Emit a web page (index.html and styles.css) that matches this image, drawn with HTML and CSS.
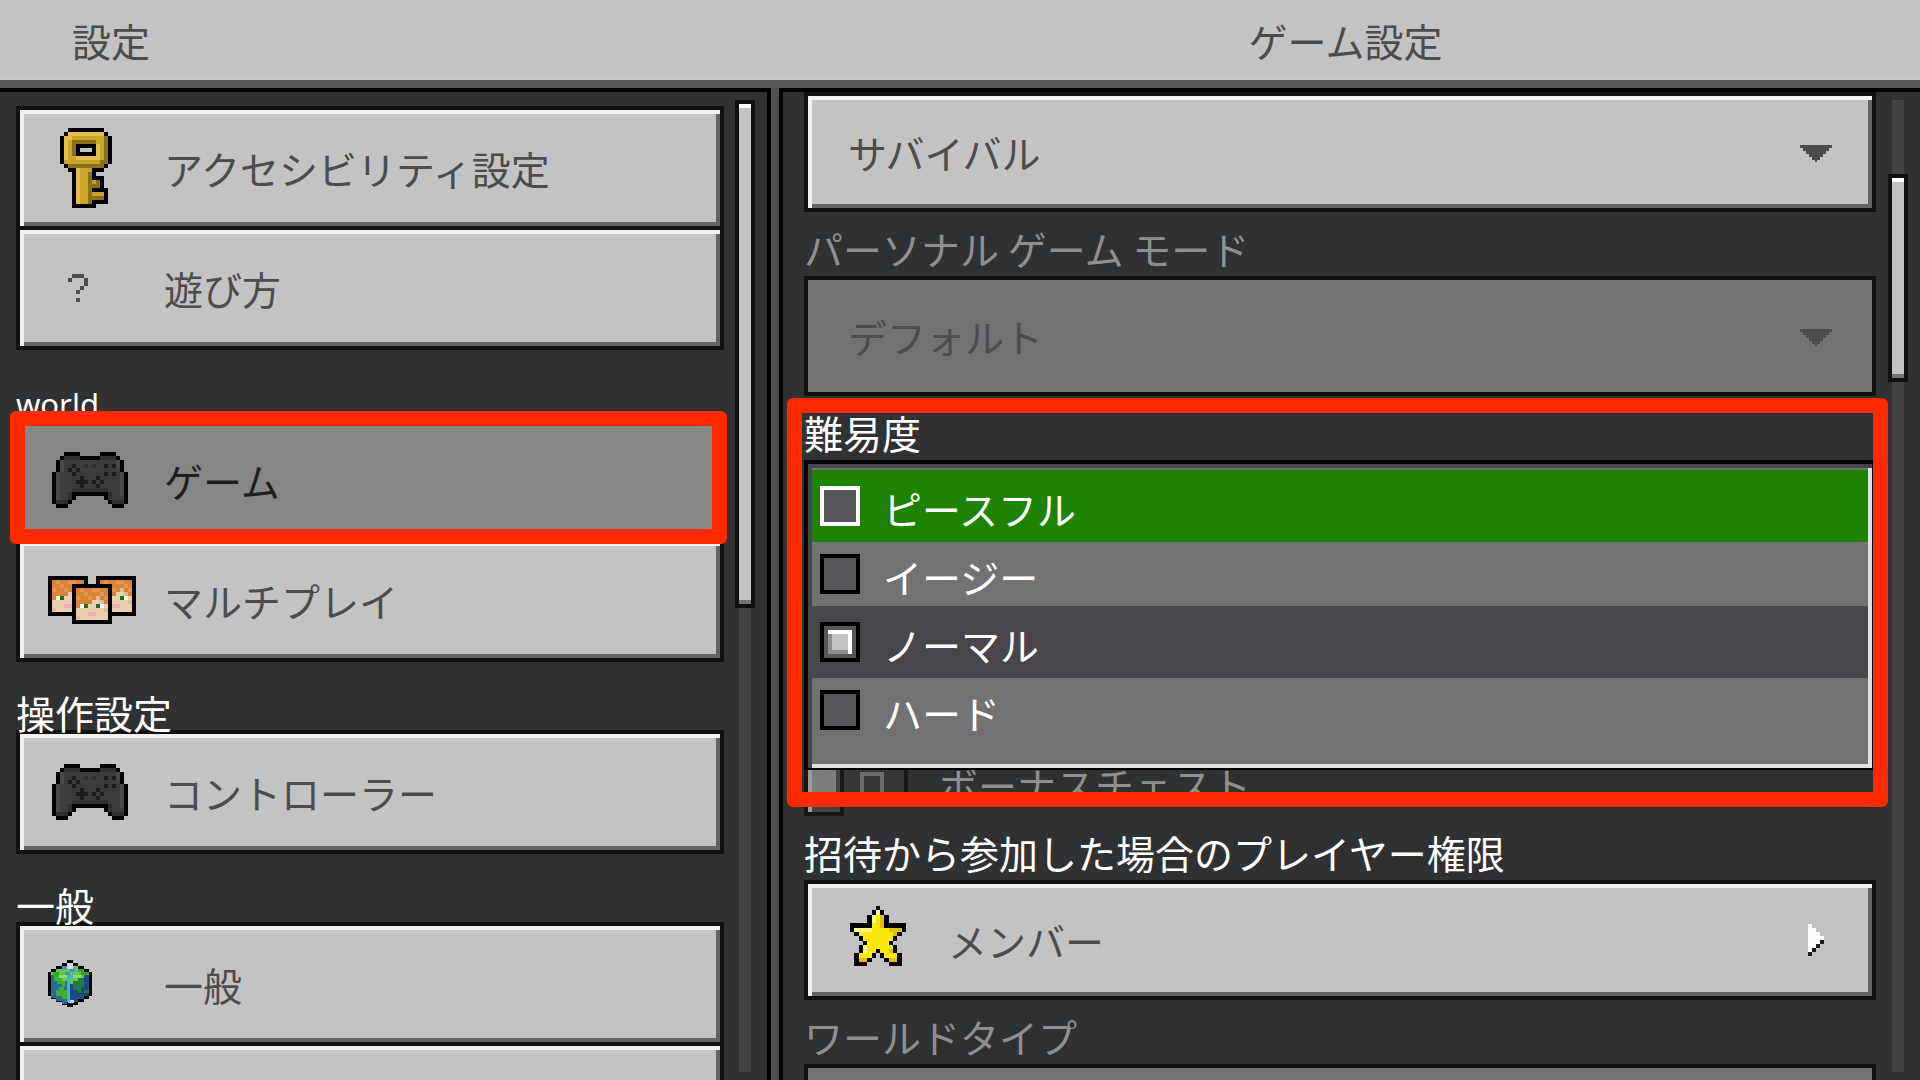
FILE: index.html
```html
<!DOCTYPE html>
<html lang="ja">

<head>
  <meta charset="UTF-8">
  <meta name="viewport" content="width=device-width, initial-scale=1">
  <title>ゲーム設定</title>
  <link rel="stylesheet" href="styles.css">
</head>

<body>

  <!-- icons, one unit = one game pixel -->
  <svg class="sprites" aria-hidden="true">
    <symbol id="pad" viewBox="0 0 31 20">
      <g transform="translate(3 3)" fill="none">
        <path fill="#3d3d3d" d="M3 1h4v1h5v-1h4v1h1v3h1v8h-3v-1h-1v-1h-1v-1h-7v1h-1v1h-1v1h-3v-8h1v-3h1z" />
        <path stroke="#4b4b4b" d="M1 5.5h1M1 6.5h1M1 7.5h1M1 8.5h1M1 9.5h1M1 10.5h1M1 11.5h1M17 5.5h1M17 6.5h1M17 7.5h1M17 8.5h1M17 9.5h1M17 10.5h1M2 2.5h1M2 3.5h1M2 4.5h1M16 2.5h1M16 3.5h1" />
        <path stroke="#303030" d="M3 1.5h4M12 1.5h4M5 9.5h9M4 10.5h1M14 10.5h1M4 11.5h1M14 11.5h1M1 12.5h3M15 12.5h3M8 3.5h1M10 3.5h1" />
        <path stroke="#1c1c1c" d="M5 3.5h1M4 4.5h1M6 4.5h1M5 5.5h1M13 3.5h1M15 3.5h1M13 5.5h1M15 5.5h1M7 6.5h1M6 7.5h3M7 8.5h1M11 6.5h1M10 7.5h1M12 7.5h1M11 8.5h1" />
        <path stroke="#000" d="M3 .5h4M12 .5h4M2 1.5h1M7 1.5h5M16 1.5h1M1 2.5h1M1 3.5h1M1 4.5h1M17 2.5h1M17 3.5h1M17 4.5h1M5 10.5h9M5 11.5h1M13 11.5h1M4 12.5h1M14 12.5h1M1 13.5h3M15 13.5h3" />
        <path fill="#000" d="M0 5h1v8h-1zM18 5h1v8h-1z" />
      </g>
    </symbol>
    <symbol id="key" viewBox="0 0 31 20">
      <g transform="translate(5 0)">
        <path fill="#000" fill-rule="evenodd" d="M2 0h9v1h1v1h1v7h-1v1h-1v1h-2v1h2v3h1v4h-3v1h-6v-9h-1v-1h-1v-1h-1v-7h1v-1h1zM5 5h3v1h-3z" />
        <path fill="#c9a42b" fill-rule="evenodd" d="M2 1h9v1h1v7h-1v1h-3v3h2v2h-2v1h3v2h-3v1h-4v-9h-2v-1h-1v-7h1zM4 4v3h5v-3z" />
        <path fill="#e4bd4c" d="M2 1h9v1h-8v1h-1v5h-1v-6h1zM4 10h1v9h-1zM4 7h5v-3h1v4h-6z" />
        <path fill="#8c6f1b" d="M11 2h1v7h-1v1h-9v-1h8v-1h1zM3 3h6v1h-5v3h-1zM7 11h1v8h-1zM8 14h1v1h-1zM8 17h3v1h-3zM9 13h1v2h-1z" />
      </g>
    </symbol>
    <symbol id="help" viewBox="0 0 124 80">
      <path fill="#4c4c4c" d="M32 26h12v4h-12zM28 30h4v4h-4zM44 30h4v8h-4zM40 38h4v4h-4zM36 42h4v4h-4zM36 50h4v4h-4z" />
    </symbol>
    <symbol id="face" viewBox="0 0 10 10">
      <path fill="#000" d="M0 0h10v10h-10z" />
      <path fill="#eacfae" d="M1 1h8v8h-8z" />
      <path fill="#d88338" d="M1 1h8v4h-1v-1h-1v-1h-1v1h-1v1h-3v1h-1z" />
      <path fill="#e39549" d="M2 1h1v1h-1zM5 1h2v1h-2zM3 2h1v1h-1zM7 2h1v1h-1zM1 3h1v1h-1zM4 3h1v1h-1zM8 3h1v1h-1z" />
      <path fill="#dcbd98" d="M6 3h1v1h-1zM7 4h1v1h-1zM1 8h1v1h-1zM8 6h1v1h-1z" />
      <path fill="#fff" d="M2 5h1v1h-1zM7 5h1v1h-1z" />
      <path fill="#236b26" d="M3 5h1v1h-1zM6 5h1v1h-1z" />
      <path fill="#e8b5ae" d="M4 7h2v1h-2z" />
    </symbol>
    <symbol id="players" viewBox="0 0 31 20">
      <use href="#face" x="2" y="4" width="10" height="10" />
      <use href="#face" x="14" y="4" width="10" height="10" />
      <use href="#face" x="8" y="6" width="10" height="10" />
    </symbol>
    <symbol id="globe" viewBox="0 0 124 80">
      <g transform="translate(8 16)">
        <path fill="#000" d="M19 0h6v3h5v3h6v3h5v3h3v24h-3v3h-5v3h-6v3h-5v2h-6v-2h-5v-3h-6v-3h-5v-3h-3v-24h3v-3h5v-3h6v-3h5z" />
        <path fill="#62c94b" d="M19 3h6v3h5v3h6v3h5v3h-5v3h-6v3h-5v3h-6v-3h-5v-3h-6v-3h-5v-3h5v-3h6v-3h5z" />
        <path fill="#2b6a93" d="M3 15h5v3h6v3h5v23h-5v-3h-6v-3h-5z" />
        <path fill="#174b87" d="M41 15v21h-5v3h-6v3h-5v2h-3v-20h3v-3h5v-3h6v-3z" />
        <path fill="#3fae32" d="M6 15h8v6h3v6h-3v-3h-5v-3h-3zM11 27h5v3h3v9h-5v-3h-6v-6h3z" />
        <path fill="#247a3b" d="M25 21h5v-3h6v9h-3v6h-3v-3h-5zM36 30h5v3h-5z" />
        <path fill="#35a52a" d="M30 9h6v3h5v3h-8v-3h-3zM5 12h6v3h-6z" />
        <path fill="#8bdc74" d="M11 15h8v3h-8zM25 15h8v3h-8z" />
        <path fill="#c6dce3" d="M19 3h6v6h-6zM20 40h6v3h-6z" />
        <path fill="#4f8bc6" d="M22 9h5v3h-5v3h-5v-3h5zM14 6h5v3h-5z" />
        <path fill="#3fb2dc" d="M19 15h6v3h-3v24h-3z" />
      </g>
    </symbol>
    <symbol id="star" viewBox="0 0 13 16">
      <path fill="#000" d="M6 0h1v1h1v1h1v2h4v2h-1v1h-1v1h-1v1h1v2h1v3h-3v-1h-1v-1h-1v-1h-1v1h-1v1h-1v1h-3v-3h1v-2h1v-1h-1v-1h-1v-1h-1v-2h4v-2h1v-1h1z" />
      <path fill="#f8e80b" d="M6 1h1v1h1v3h4v1h-1v1h-1v1h-1v1h1v2h1v2h-2v-1h-1v-1h-1v-1h-1v1h-1v1h-1v1h-2v-2h1v-2h1v-1h-1v-1h-1v-1h-1v-1h4v-3h1z" />
      <path fill="#fdf684" d="M6 1h1v1h-1v2h-1v-2h1zM1 5h4v1h-4zM3 9h1v2h-1z" />
      <path fill="#dfc00c" d="M7 2h1v3h-1zM9 5h3v1h-1v1h-1v-1h-1zM2 12h2v1h-2zM9 12h2v1h-2zM9 10h1v1h-1z" />
    </symbol>
    <symbol id="down" viewBox="0 0 32 17">
      <path d="M0 0h32v3h-3v3h-3v3h-3v3h-3v3h-3v2h-2v-2h-3v-3h-3v-3h-3v-3h-3v-3h-3z" />
    </symbol>
    <symbol id="next" viewBox="0 0 4 8">
      <path fill="#fafafa" d="M0 0h1v1h1v1h1v1h1v1h-1v1h-1v1h-1v1h-1z" />
      <path fill="#1c1c1c" d="M3 4h1v1h-1zM2 5h1v1h-1zM1 6h1v1h-1zM0 7h1v1h-1z" />
    </symbol>
  </svg>

  <header class="topbar">
    <h1>設定</h1>
    <h1 class="title">ゲーム設定</h1>
  </header>

  <main class="panels">
    <div class="panel left">
      <nav class="menu">
        <button type="button" class="item"><svg class="icon"><use href="#key" /></svg>アクセシビリティ設定</button>
        <button type="button" class="item"><svg class="icon"><use href="#help" /></svg>遊び方</button>

        <h2 class="latin">world</h2>
        <div class="marked">
          <button type="button" class="item selected"><svg class="icon"><use href="#pad" /></svg>ゲーム</button>
          <div class="mark"></div>
        </div>
        <button type="button" class="item"><svg class="icon"><use href="#players" /></svg>マルチプレイ</button>

        <h2>操作設定</h2>
        <button type="button" class="item"><svg class="icon"><use href="#pad" /></svg>コントローラー</button>

        <h2>一般</h2>
        <button type="button" class="item"><svg class="icon"><use href="#globe" /></svg>一般</button>
        <button type="button" class="item"></button>
      </nav>
      <div class="scroll">
        <div class="thumb"></div>
      </div>
    </div>

    <div class="panel right">
      <form class="options">
        <div class="drop">
          <select aria-label="ゲームモード">
            <option>サバイバル</option>
          </select>
          <svg class="arrow"><use href="#down" /></svg>
        </div>

        <label class="caption dim" for="personal">パーソナル ゲーム モード</label>
        <div class="drop">
          <select id="personal" disabled>
            <option>デフォルト</option>
          </select>
          <svg class="arrow"><use href="#down" /></svg>
        </div>

        <div class="marked" role="radiogroup" aria-labelledby="difficulty">
          <div class="caption" id="difficulty">難易度</div>
          <div class="choices">
            <label class="choice hover"><input type="radio" name="level">ピースフル</label>
            <label class="choice"><input type="radio" name="level">イージー</label>
            <label class="choice current"><input type="radio" name="level" checked>ノーマル</label>
            <label class="choice"><input type="radio" name="level">ハード</label>
          </div>
          <div class="mark"></div>
        </div>

        <label class="switch">
          <input type="checkbox" disabled>
          <span class="off"></span>
          ボーナスチェスト
        </label>

        <label class="caption" for="member">招待から参加した場合のプレイヤー権限</label>
        <button type="button" class="item wide" id="member">
          <svg class="star"><use href="#star" /></svg>メンバー
          <svg class="next"><use href="#next" /></svg>
        </button>

        <label class="caption dim" for="worldtype">ワールドタイプ</label>
        <div class="drop">
          <select id="worldtype" disabled></select>
        </div>
      </form>
      <div class="scroll">
        <div class="thumb"></div>
      </div>
    </div>
  </main>

</body>

</html>
```
FILE: styles.css
```css
* {
  box-sizing: border-box;
}

body {
  margin: 0;
  height: 100vh;
  overflow: hidden;
  display: flex;
  flex-direction: column;
  background: #2f3132;
  color: #ffffff;
  font-family: "Noto Sans CJK JP", "Noto Sans", sans-serif;
  font-size: 39px;
  font-weight: 400;
}

button,
select {
  font: inherit;
  color: #4c4c4c;
}

h1,
h2 {
  margin: 0;
  font-size: 39px;
  font-weight: 400;
}

svg {
  shape-rendering: crispEdges;
}

.sprites {
  display: none;
}

/* top bar */
.topbar {
  flex: none;
  display: grid;
  grid-template-columns: 25fr 37fr;
  column-gap: 8px;
  height: 88px;
  background: #c3c3c3;
  border-bottom: 8px solid #58585a;
  box-shadow: inset 0 -4px #c5c8c9;
  color: #4c4c4c;
}

.topbar h1 {
  padding-left: 72px;
  line-height: 80px;
}

.topbar .title {
  padding: 0 8px 0 0;
  text-align: center;
}

/* two panels with the grey divider between them */
.panels {
  flex: 1;
  min-height: 0;
  display: grid;
  grid-template-columns: 25fr 37fr;
  column-gap: 8px;
  background: #4f4f51;
}

.panel {
  display: flex;
  min-height: 0;
  overflow: hidden;
  background: #2f3132;
  border-top: 4px solid #000000;
}

.left {
  border-right: 4px solid #000000;
  padding: 0 12px 0 16px;
  gap: 11px;
}

.right {
  border-left: 4px solid #000000;
  padding: 0 12px 0 21px;
  gap: 12px;
}

.menu {
  flex: 1;
  padding-top: 14px;
}

.options {
  flex: 1;
  min-width: 0;
}

.item {
  display: flex;
  align-items: center;
  width: 100%;
  height: 124px;
  padding: 0 24px 0 20px;
  border: 4px solid #111111;
  background: #c3c3c3;
  box-shadow: inset 4px 4px #f1f1f1, inset -4px -4px #646464;
  text-align: left;
}

.item + .item,
.marked + .item {
  margin-top: -4px;
}

.item.selected {
  background: #868686;
  box-shadow: none;
  color: #1e1e1e;
}

.item.wide {
  height: 120px;
  padding: 0 48px 0 42px;
}

.icon {
  flex: none;
  width: 124px;
  height: 80px;
}

.star {
  width: 56px;
  height: 69px;
  margin-right: 42px;
}

.next {
  width: 16px;
  height: 32px;
  margin-left: auto;
}

h2 {
  height: 68px;
  padding-top: 34px;
  line-height: 32px;
}

h2.latin {
  padding-top: 38px;
  font-family: "Noto Sans", sans-serif;
  font-size: 31px;
}

/* red frame round the thing to look at */
.marked {
  position: relative;
}

.mark {
  position: absolute;
  z-index: 2;
  top: -7px;
  right: -3px;
  bottom: -2px;
  left: -6px;
  border: 15px solid #ff2a00;
  border-radius: 6px;
  pointer-events: none;
}

.options .mark {
  top: 2px;
  right: -12px;
  bottom: -37px;
  left: -17px;
}

.caption {
  display: block;
  height: 64px;
  padding-top: 12px;
  line-height: 48px;
}

.dim {
  color: #8f8f8f;
}

.drop {
  position: relative;
  height: 120px;
}

.drop select {
  display: block;
  width: 100%;
  height: 120px;
  padding: 0 80px 0 40px;
  appearance: none;
  border: 4px solid #111111;
  border-radius: 0;
  background: #c3c3c3;
  box-shadow: inset 4px 4px #f1f1f1, inset -4px -4px #646464;
}

.drop select:disabled {
  background: #727272;
  box-shadow: none;
  color: #4c4c4c;
  opacity: 1;
}

.arrow {
  position: absolute;
  top: 53px;
  right: 44px;
  width: 32px;
  height: 17px;
  fill: #4c4c4c;
  pointer-events: none;
}

.choices {
  position: relative;
  z-index: 1;
  height: 310px;
  padding: 6px 4px 4px 4px;
  border: 4px solid #000000;
  border-bottom-width: 2px;
  background: #727272;
  box-shadow: inset 4px 4px #48464a, inset -4px -4px #e0e0e0;
}

.choice {
  display: flex;
  align-items: center;
  height: 64px;
  padding: 4px 0 0 8px;
}

.choice.hover,
.choice.current {
  height: 72px;
}

.choice.hover {
  background: #1e8203;
}

.choice.current {
  background: #48464a;
}

.choice input {
  appearance: none;
  width: 40px;
  height: 40px;
  margin: 0 23px 4px 0;
  border: 4px solid #000000;
  background: #58565a;
}

.choice.hover input {
  border-color: #ffffff;
}

.choice input:checked::before {
  content: "";
  display: block;
  width: 24px;
  height: 24px;
  margin: 4px;
  background: #c3c3c3;
  box-shadow: inset -4px 4px #ffffff, inset 4px -4px #8c8c8c;
}

.switch {
  display: flex;
  height: 60px;
  margin-top: -14px;
  line-height: 56px;
  color: #8f8f8f;
}

.switch input {
  appearance: none;
  width: 40px;
  height: 60px;
  margin: 0;
  border: 4px solid #181818;
  background: #7c7c7c;
  box-shadow: inset 4px 0 #9a9a9a, inset -4px -8px #444444;
}

.switch .off {
  width: 64px;
  height: 48px;
  margin-right: 31px;
  padding: 16px 0 0 16px;
  border-right: 4px solid #181818;
  background: #373737;
}

.switch .off::before {
  content: "";
  display: block;
  width: 16px;
  height: 24px;
  border: 4px solid #6b6b6b;
}

/* scroll bars */
.scroll {
  flex: none;
  width: 20px;
  margin: 8px 0;
  background: linear-gradient(#424242, #424242) center / 12px 100% no-repeat;
}

.thumb {
  height: 508px;
  border: 4px solid #111111;
  background: #c3c3c3;
  box-shadow: inset 0 4px #ffffff, inset 0 -4px #727272;
}

.right .scroll .thumb {
  height: 208px;
  margin-top: 74px;
}
```
